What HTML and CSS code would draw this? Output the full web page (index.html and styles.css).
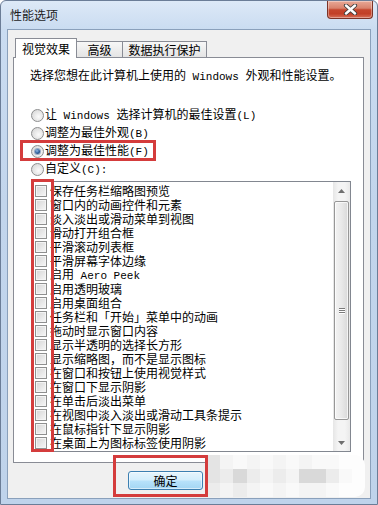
FILE: index.html
```html
<!DOCTYPE html>
<html lang="zh-CN">
<head>
<meta charset="utf-8">
<title>性能选项</title>
<link rel="stylesheet" href="styles.css">
</head>
<body>
<div class="window">
  <div class="titlebar">
    <span class="title">性能选项</span>
    <div class="close">
      <svg width="15" height="11" viewBox="0 0 15 11">
        <path d="M3 1.5 L12 9.5 M12 1.5 L3 9.5" stroke="#3d3d3d" stroke-width="4.2" stroke-linecap="round"/>
        <path d="M3 1.5 L12 9.5 M12 1.5 L3 9.5" stroke="#ffffff" stroke-width="2.4" stroke-linecap="round"/>
      </svg>
    </div>
  </div>
  <div class="client">
    <div class="tabs">
      <div class="tab active">视觉效果</div>
      <div class="tab t2">高级</div>
      <div class="tab t3">数据执行保护</div>
    </div>
    <div class="panel">
      <p class="desc">选择您想在此计算机上使用的<span class="lat"> Windows </span>外观和性能设置。</p>
      <div class="radios">
        <div class="radio"><span class="rb"></span><span class="label">让<span class="lat"> Windows </span>选择计算机的最佳设置<span class="lat">(L)</span></span></div>
        <div class="radio"><span class="rb"></span><span class="label">调整为最佳外观<span class="lat">(B)</span></span></div>
        <div class="radio"><span class="rb checked"></span><span class="label">调整为最佳性能<span class="lat">(F)</span></span></div>
        <div class="radio"><span class="rb"></span><span class="label">自定义<span class="lat">(C):</span></span></div>
      </div>
      <div class="list">
        <div class="items">
          <div class="item"><span class="cb"></span><span class="label">保存任务栏缩略图预览</span></div>
          <div class="item"><span class="cb"></span><span class="label">窗口内的动画控件和元素</span></div>
          <div class="item"><span class="cb"></span><span class="label">淡入淡出或滑动菜单到视图</span></div>
          <div class="item"><span class="cb"></span><span class="label">滑动打开组合框</span></div>
          <div class="item"><span class="cb"></span><span class="label">平滑滚动列表框</span></div>
          <div class="item"><span class="cb"></span><span class="label">平滑屏幕字体边缘</span></div>
          <div class="item"><span class="cb"></span><span class="label">启用<span class="lat"> Aero Peek</span></span></div>
          <div class="item"><span class="cb"></span><span class="label">启用透明玻璃</span></div>
          <div class="item"><span class="cb"></span><span class="label">启用桌面组合</span></div>
          <div class="item"><span class="cb"></span><span class="label">任务栏和「开始」菜单中的动画</span></div>
          <div class="item"><span class="cb"></span><span class="label">拖动时显示窗口内容</span></div>
          <div class="item"><span class="cb"></span><span class="label">显示半透明的选择长方形</span></div>
          <div class="item"><span class="cb"></span><span class="label">显示缩略图，而不是显示图标</span></div>
          <div class="item"><span class="cb"></span><span class="label">在窗口和按钮上使用视觉样式</span></div>
          <div class="item"><span class="cb"></span><span class="label">在窗口下显示阴影</span></div>
          <div class="item"><span class="cb"></span><span class="label">在单击后淡出菜单</span></div>
          <div class="item"><span class="cb"></span><span class="label">在视图中淡入淡出或滑动工具条提示</span></div>
          <div class="item"><span class="cb"></span><span class="label">在鼠标指针下显示阴影</span></div>
          <div class="item"><span class="cb"></span><span class="label">在桌面上为图标标签使用阴影</span></div>
        </div>
        <div class="scrollbar">
          <div class="arrow">
            <svg width="7" height="4" viewBox="0 0 7 4"><path d="M0 4 L3.5 0 L7 4 Z" fill="#6f6f6f"/></svg>
          </div>
          <div class="thumb">
            <span class="grip"></span><span class="grip"></span><span class="grip"></span>
          </div>
          <div class="track"></div>
          <div class="arrow">
            <svg width="7" height="4" viewBox="0 0 7 4"><path d="M0 0 L7 0 L3.5 4 Z" fill="#6f6f6f"/></svg>
          </div>
        </div>
      </div>
    </div>
    <div class="actions">
      <button class="btn">确定</button>
    </div>
  </div>

  <div class="mosaic">
    <i class="m2"></i><i class="m4"></i><i class="m5"></i><i class="m4"></i><i class="m5"></i><i class="m4"></i><i class="m5"></i><i class="m4"></i><i class="m5"></i><i class="m5"></i><i class="m6"></i><i class="m6"></i>
    <i class="m2"></i><i class="m3"></i><i class="m1"></i><i class="m3"></i><i class="m4"></i><i class="m3"></i><i class="m4"></i><i class="m1"></i><i class="m1"></i><i class="m3"></i><i class="m5"></i><i class="m6"></i>
    <i class="m3"></i><i class="m4"></i><i class="m3"></i><i class="m4"></i><i class="m5"></i><i class="m4"></i><i class="m5"></i><i class="m4"></i><i class="m4"></i><i class="m5"></i><i class="m6"></i><i class="m6"></i>
  </div>
  <div class="redbox rb-radio"></div>
  <div class="redbox rb-checks"></div>
  <div class="redbox rb-button"></div>
</div>
</body>
</html>
```

FILE: styles.css
```css
html, body {
  margin: 0;
  padding: 0;
  background: #ffffff;
}

body {
  font-family: "Noto Sans CJK SC", "Noto Sans", sans-serif;
  font-size: 12px;
  color: #000;
}

.window {
  position: relative;
  width: 378px;
  height: 505px;
  box-sizing: border-box;
  border: 1px solid #6b7d97;
  border-radius: 6px 6px 0 0;
  background: linear-gradient(#dde9f7, #cadcf1 28px, #c2d5ec 200px, #bfd3eb);
  padding: 0 6px 5px 6px;
  display: flex;
  flex-direction: column;
  overflow: hidden;
}

.titlebar {
  height: 28px;
  flex: none;
  display: flex;
  justify-content: space-between;
  align-items: flex-start;
}

.title {
  margin: 7px 0 0 3px;
  line-height: 14px;
  font-size: 12px;
  color: #1c1c1c;
}

.close {
  width: 46px;
  height: 18px;
  box-sizing: border-box;
  margin-right: -2px;
  border: 1px solid #7b3327;
  border-top: none;
  border-radius: 0 0 4px 4px;
  background: linear-gradient(#e9a997 0%, #d9836d 42%, #c5462d 52%, #c23f26 75%, #d77058 100%);
  box-shadow: inset 0 0 0 1px rgba(255, 255, 255, 0.35);
  display: flex;
  align-items: center;
  justify-content: center;
}

.client {
  height: 470px;
  flex: none;
  box-sizing: border-box;
  border: 1px solid #8aa0bb;
  background: #f0f0f0;
  display: flex;
  flex-direction: column;
}

.tabs {
  display: flex;
  align-items: flex-end;
  height: 19px;
  margin: 8px 0 0 7px;
}

.tab {
  box-sizing: border-box;
  height: 16px;
  line-height: 15px;
  border: 1px solid #898c95;
  border-bottom: none;
  background: linear-gradient(#f7f7f7, #e4e4e4);
  text-align: center;
  margin-left: -1px;
  color: #000;
}

.tab.active {
  height: 20px;
  width: 62px;
  margin-left: 0;
  margin-bottom: -1px;
  padding-top: 2px;
  line-height: 16px;
  background: #ffffff;
  position: relative;
  z-index: 1;
}

.tab.t2 { width: 47px; }
.tab.t3 { width: 85px; }

.panel {
  width: 351px;
  height: 406px;
  box-sizing: border-box;
  margin-left: 5px;
  border: 1px solid #898c95;
  background: #ffffff;
  display: flex;
  flex-direction: column;
}

.desc {
  margin: 10px 0 0 16px;
  line-height: 14px;
  white-space: nowrap;
}

.lat {
  font-family: "Liberation Mono", "DejaVu Sans Mono", monospace;
  font-size: 11px;
}

.label {
  white-space: pre;
  line-height: 14px;
}

.radios {
  margin: 22px 0 0 17px;
  display: flex;
  flex-direction: column;
}

.radio {
  height: 18px;
  display: flex;
  align-items: center;
  white-space: nowrap;
}

.rb {
  width: 13px;
  height: 13px;
  flex: none;
  box-sizing: border-box;
  margin-right: 1px;
  border: 1px solid #8d8e8f;
  border-radius: 50%;
  background: radial-gradient(circle at 60% 60%, #fbfbfb 0%, #e4e4e4 55%, #cfcfcf 100%);
  display: flex;
  align-items: center;
  justify-content: center;
}

.rb.checked::after {
  content: "";
  width: 5px;
  height: 5px;
  border-radius: 50%;
  background: radial-gradient(circle at 40% 35%, #8fb9e6 0%, #2c5d99 55%, #1a3a66 100%);
  box-shadow: 0 0 0 1px rgba(70, 110, 160, 0.5);
}

.list {
  margin: 3px 0 0 18px;
  width: 319px;
  height: 271px;
  box-sizing: border-box;
  border: 1px solid #828790;
  display: flex;
  background: #ffffff;
}

.items {
  flex: 1;
  padding: 2px 0 0 2px;
  overflow: hidden;
}

.item {
  height: 14px;
  line-height: 14px;
  display: flex;
  align-items: center;
  white-space: nowrap;
}

.cb {
  width: 12px;
  height: 12px;
  box-sizing: border-box;
  flex: none;
  margin-right: 3px;
  border: 1px solid #8e8f8f;
  background: linear-gradient(135deg, #d6d6d6 0%, #e6e6e6 50%, #f7f7f7 100%);
  box-shadow: inset 0 0 0 1px #f4f4f4;
}

.scrollbar {
  width: 17px;
  flex: none;
  display: flex;
  flex-direction: column;
  background: linear-gradient(90deg, #e6e6e6, #f4f4f4 30%, #f4f4f4 70%, #e9e9e9);
}

.arrow {
  height: 17px;
  flex: none;
  display: flex;
  align-items: center;
  justify-content: center;
}

.thumb {
  height: 219px;
  flex: none;
  margin: 2px 1px 0 1px;
  box-sizing: border-box;
  border: 1px solid #979797;
  border-radius: 2px;
  background: linear-gradient(90deg, #f3f3f3, #e9e9e9 50%, #d9d9d9);
  box-shadow: inset 0 0 0 1px rgba(255, 255, 255, 0.7);
  display: flex;
  flex-direction: column;
  align-items: center;
  justify-content: center;
  gap: 1px;
}

.grip {
  width: 6px;
  height: 1px;
  background: #7a7a7a;
  box-shadow: 0 1px 0 #ffffff;
}

.track {
  flex: 1;
}

.actions {
  display: flex;
  margin: 8px 0 0 120px;
}

.btn {
  width: 75px;
  height: 19px;
  box-sizing: border-box;
  padding: 0;
  border: 1px solid #3c7fb1;
  border-radius: 3px;
  background: linear-gradient(#e6f5fd, #d3eefc 48%, #b8e2fb 52%, #a3d6f3);
  box-shadow: inset 0 0 0 1px rgba(255, 255, 255, 0.55);
  font-family: "Noto Sans CJK SC", sans-serif;
  font-size: 12px;
  line-height: 16px;
  color: #000;
}

.mosaic {
  position: absolute;
  left: 206px;
  top: 454px;
  width: 158px;
  height: 42px;
  display: grid;
  grid-template-columns: repeat(12, 1fr);
  grid-template-rows: repeat(3, 1fr);
  border-radius: 0 10px 10px 0;
  overflow: hidden;
}

.mosaic i { display: block; }
.mosaic .m1 { background: #d9d9d9; }
.mosaic .m2 { background: #e4e4e4; }
.mosaic .m3 { background: #ececec; }
.mosaic .m4 { background: #f4f4f4; }
.mosaic .m5 { background: #f9f9f9; }
.mosaic .m6 { background: #fdfdfd; }

.redbox {
  position: absolute;
  box-sizing: border-box;
  border: 3px solid #d43c3c;
}

.rb-radio {
  left: 19px;
  top: 139px;
  width: 136px;
  height: 21px;
}

.rb-checks {
  left: 30px;
  top: 178px;
  width: 23px;
  height: 273px;
}

.rb-button {
  left: 112px;
  top: 454px;
  width: 95px;
  height: 42px;
}
```
